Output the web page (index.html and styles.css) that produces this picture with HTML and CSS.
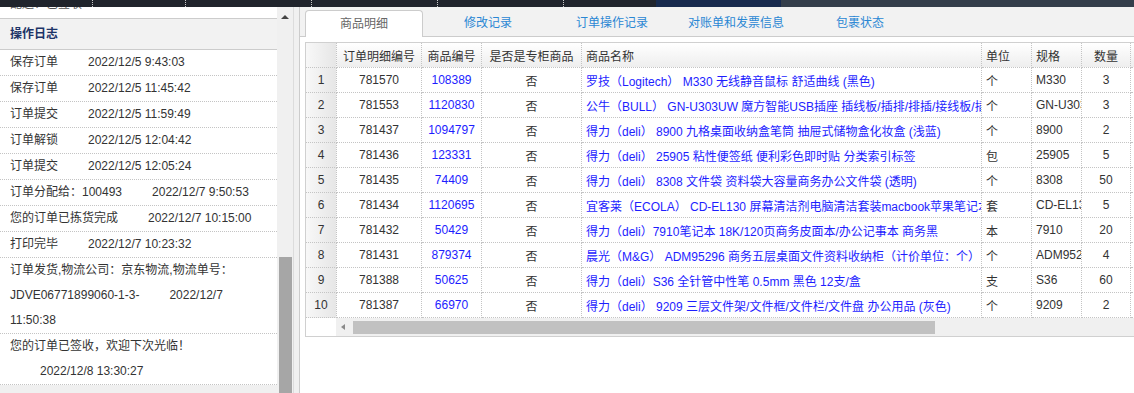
FILE: index.html
```html
<!DOCTYPE html>
<html lang="zh-CN">
<head>
  <meta charset="utf-8">
  <title>订单详情</title>
  <link rel="stylesheet" href="styles.css">
</head>
<body>
  <div class="topbar">
    <span class="seg s1"></span>
    <span class="seg s2"></span>
    <span class="seg s3"></span>
    <span class="seg s3"></span>
    <span class="seg s3"></span>
    <span class="seg s6"></span>
    <span class="seg navy"></span>
    <span class="seg slate"></span>
  </div>

  <div class="workspace">
    <aside class="log-panel">
      <div class="log-list">
        <div class="log-clip"><span>配送：已签收</span></div>
        <h3 class="log-title">操作日志</h3>
        <ul class="log-rows">
          <li><span>保存订单</span><wbr><span class="time">2022/12/5 9:43:03</span></li>
          <li><span>保存订单</span><wbr><span class="time">2022/12/5 11:45:42</span></li>
          <li><span>订单提交</span><wbr><span class="time">2022/12/5 11:59:49</span></li>
          <li><span>订单解锁</span><wbr><span class="time">2022/12/5 12:04:42</span></li>
          <li><span>订单提交</span><wbr><span class="time">2022/12/5 12:05:24</span></li>
          <li><span>订单分配给：100493</span><wbr><span class="time">2022/12/7 9:50:53</span></li>
          <li><span>您的订单已拣货完成</span><wbr><span class="time">2022/12/7 10:15:00</span></li>
          <li><span>打印完毕</span><wbr><span class="time">2022/12/7 10:23:32</span></li>
          <li><span>订单发货,物流公司：京东物流,物流单号：<wbr>JDVE06771899060-1-3-</span><wbr><span class="time">2022/12/7 11:50:38</span></li>
          <li><span>您的订单已签收，欢迎下次光临！</span><wbr><span class="time">2022/12/8 13:30:27</span></li>
        </ul>
      </div>
      <div class="vscroll">
        <i class="arrow-up"></i>
        <span class="vthumb"></span>
      </div>
    </aside>
    <div class="splitter"></div>

    <main class="detail">
      <nav class="tabs">
        <a class="tab active">商品明细</a>
        <a class="tab">修改记录</a>
        <a class="tab">订单操作记录</a>
        <a class="tab">对账单和发票信息</a>
        <a class="tab">包裹状态</a>
      </nav>

      <div class="grid">
        <table class="items">
          <thead>
            <tr>
              <th class="w-rn rn"></th>
              <th class="w-id c">订单明细编号</th>
              <th class="w-code c">商品编号</th>
              <th class="w-flag c">是否是专柜商品</th>
              <th class="w-name">商品名称</th>
              <th class="w-unit">单位</th>
              <th class="w-spec">规格</th>
              <th class="w-qty c">数量</th>
              <th class="w-more"></th>
            </tr>
          </thead>
          <tbody>
            <tr><td class="rn c">1</td><td class="c">781570</td><td class="c link">108389</td><td class="c">否</td><td class="link">罗技（Logitech） M330 无线静音鼠标 舒适曲线 (黑色)</td><td>个</td><td>M330</td><td class="c">3</td><td></td></tr>
            <tr><td class="rn c">2</td><td class="c">781553</td><td class="c link">1120830</td><td class="c">否</td><td class="link">公牛（BULL） GN-U303UW 魔方智能USB插座 插线板/插排/排插/接线板/插板</td><td>个</td><td>GN-U303UW</td><td class="c">3</td><td></td></tr>
            <tr><td class="rn c">3</td><td class="c">781437</td><td class="c link">1094797</td><td class="c">否</td><td class="link">得力（deli） 8900 九格桌面收纳盒笔筒 抽屉式储物盒化妆盒 (浅蓝)</td><td>个</td><td>8900</td><td class="c">2</td><td></td></tr>
            <tr><td class="rn c">4</td><td class="c">781436</td><td class="c link">123331</td><td class="c">否</td><td class="link">得力（deli） 25905 粘性便签纸 便利彩色即时贴 分类索引标签</td><td>包</td><td>25905</td><td class="c">5</td><td></td></tr>
            <tr><td class="rn c">5</td><td class="c">781435</td><td class="c link">74409</td><td class="c">否</td><td class="link">得力（deli） 8308 文件袋 资料袋大容量商务办公文件袋 (透明)</td><td>个</td><td>8308</td><td class="c">50</td><td></td></tr>
            <tr><td class="rn c">6</td><td class="c">781434</td><td class="c link">1120695</td><td class="c">否</td><td class="link">宜客莱（ECOLA） CD-EL130 屏幕清洁剂电脑清洁套装macbook苹果笔记本清洁</td><td>套</td><td>CD-EL130</td><td class="c">5</td><td></td></tr>
            <tr><td class="rn c">7</td><td class="c">781432</td><td class="c link">50429</td><td class="c">否</td><td class="link">得力（deli）7910笔记本 18K/120页商务皮面本/办公记事本 商务黑</td><td>本</td><td>7910</td><td class="c">20</td><td></td></tr>
            <tr><td class="rn c">8</td><td class="c">781431</td><td class="c link">879374</td><td class="c">否</td><td class="link">晨光（M&amp;G） ADM95296 商务五层桌面文件资料收纳柜（计价单位：个）</td><td>个</td><td>ADM95296</td><td class="c">4</td><td></td></tr>
            <tr><td class="rn c">9</td><td class="c">781388</td><td class="c link">50625</td><td class="c">否</td><td class="link">得力（deli）S36 全针管中性笔 0.5mm 黑色 12支/盒</td><td>支</td><td>S36</td><td class="c">60</td><td></td></tr>
            <tr><td class="rn c">10</td><td class="c">781387</td><td class="c link">66970</td><td class="c">否</td><td class="link">得力（deli） 9209 三层文件架/文件框/文件栏/文件盘 办公用品 (灰色)</td><td>个</td><td>9209</td><td class="c">2</td><td></td></tr>
          </tbody>
        </table>
        <div class="hscroll">
          <span class="hs-gap"></span>
          <div class="hs-track">
            <i class="arrow-left"></i>
            <span class="hthumb"></span>
          </div>
        </div>
      </div>
    </main>
  </div>
</body>
</html>
```

FILE: styles.css
```css
body {
  margin: 0;
  width: 1134px;
  height: 393px;
  overflow: hidden;
  font-family: "Liberation Sans", "Noto Sans CJK SC", sans-serif;
  font-size: 12px;
  color: #333;
  background-color: #fff;
}

/* top strip */
.topbar {
  display: flex;
  height: 7px;
  background-color: #20242c;
}

.seg {
  box-sizing: border-box;
  height: 7px;
  border-right: 1px dotted #c8c8c8;
}

.s1 { width: 93px; }
.s2 { width: 93px; }
.s3 { width: 126px; }
.s6 { width: 92px; border-right: none; }

.navy {
  width: 125px;
  border-right: none;
  background-color: #172a4e;
}

.slate {
  flex: 1;
  border-right: none;
  background-color: #343e4b;
}

.workspace {
  display: flex;
  height: 386px;
}

/* operation log */
.log-panel {
  display: flex;
}

.log-list {
  width: 277px;
  background-color: #f0f0f0;
  overflow: hidden;
}

.log-clip {
  height: 11px;
  overflow: hidden;
  padding-left: 10px;
  background-color: #fff;
  border-bottom: 1px solid #ccc;
  color: #555;
}

.log-clip span {
  display: block;
  line-height: 25px;
  margin-top: -15px;
}

.log-title {
  margin: 0;
  height: 30px;
  line-height: 30px;
  padding-left: 10px;
  font-size: 12px;
  font-weight: bold;
  color: #1d3468;
  background-color: #f2f2f2;
  border-bottom: 1px solid #ccc;
}

.log-rows {
  list-style: none;
  margin: 0;
  padding: 0;
  background-color: #fff;
}

.log-rows li {
  line-height: 25px;
  padding: 0 10px;
  border-bottom: 1px dotted #c4c4c4;
}

.log-rows .time {
  margin-left: 30px;
}

.vscroll {
  width: 16px;
  background-color: #f0f0f0;
  display: flex;
  flex-direction: column;
  align-items: center;
}

.arrow-up {
  margin-top: 8px;
  width: 0;
  height: 0;
  border-left: 4px solid transparent;
  border-right: 4px solid transparent;
  border-bottom: 4px solid #444;
}

.vthumb {
  width: 13px;
  margin-top: 238px;
  flex: 1;
  background-color: #a6a6a6;
}

.splitter {
  width: 5px;
  background-color: #f0f0f0;
  border-left: 1px solid #dcdcdc;
}

/* detail */
.detail {
  flex: 1;
  min-width: 0;
  overflow: hidden;
  border-left: 1px solid #ccc;
  background-color: #fff;
}

.tabs {
  display: flex;
  height: 26px;
  padding: 3px 0 0 5px;
  gap: 6px;
  background-color: #f2f2f2;
  border-bottom: 1px solid #ccc;
}

.tab {
  box-sizing: border-box;
  width: 118px;
  height: 27px;
  line-height: 26px;
  text-align: center;
  color: #2a87d4;
  cursor: pointer;
}

.tab.active {
  color: #666;
  background-color: #fff;
  border: 1px solid #ccc;
  border-bottom: none;
  border-radius: 4px 4px 0 0;
}

.grid {
  width: 925px;
  margin: 5px 0 0 5px;
  border: 1px solid #d0d0d0;
}

.items {
  table-layout: fixed;
  width: 925px;
  border-collapse: separate;
  border-spacing: 0;
}

.items th,
.items td {
  box-sizing: border-box;
  height: 25px;
  padding: 0 0 0 4px;
  text-align: left;
  font-weight: normal;
  white-space: nowrap;
  overflow: hidden;
  border-right: 1px dotted #c4c4c4;
  border-bottom: 1px dotted #c4c4c4;
}

.items th {
  background: linear-gradient(#ffffff, #eeeeee);
}

.items .c {
  padding: 0;
  text-align: center;
}

.items .rn {
  background: linear-gradient(to right, #f8f8f8, #e6e6e6);
}

.items .link {
  color: #1d1dff;
}

.w-rn { width: 31px; }
.w-id { width: 85px; }
.w-code { width: 60px; }
.w-flag { width: 100px; }
.w-name { width: 400px; }
.w-unit { width: 50px; }
.w-spec { width: 50px; }
.w-qty { width: 49px; }
.w-more { width: 100px; }

.hscroll {
  display: flex;
  height: 18px;
}

.hs-gap {
  width: 30px;
}

.hs-track {
  flex: 1;
  display: flex;
  align-items: flex-start;
  background-color: #f0f0f0;
}

.arrow-left {
  margin: 6px 0 0 5px;
  width: 0;
  height: 0;
  border-top: 3.5px solid transparent;
  border-bottom: 3.5px solid transparent;
  border-right: 4px solid #8a8a8a;
}

.hthumb {
  margin: 3px 0 0 8px;
  width: 582px;
  height: 13px;
  background-color: #c1c1c1;
}
```
